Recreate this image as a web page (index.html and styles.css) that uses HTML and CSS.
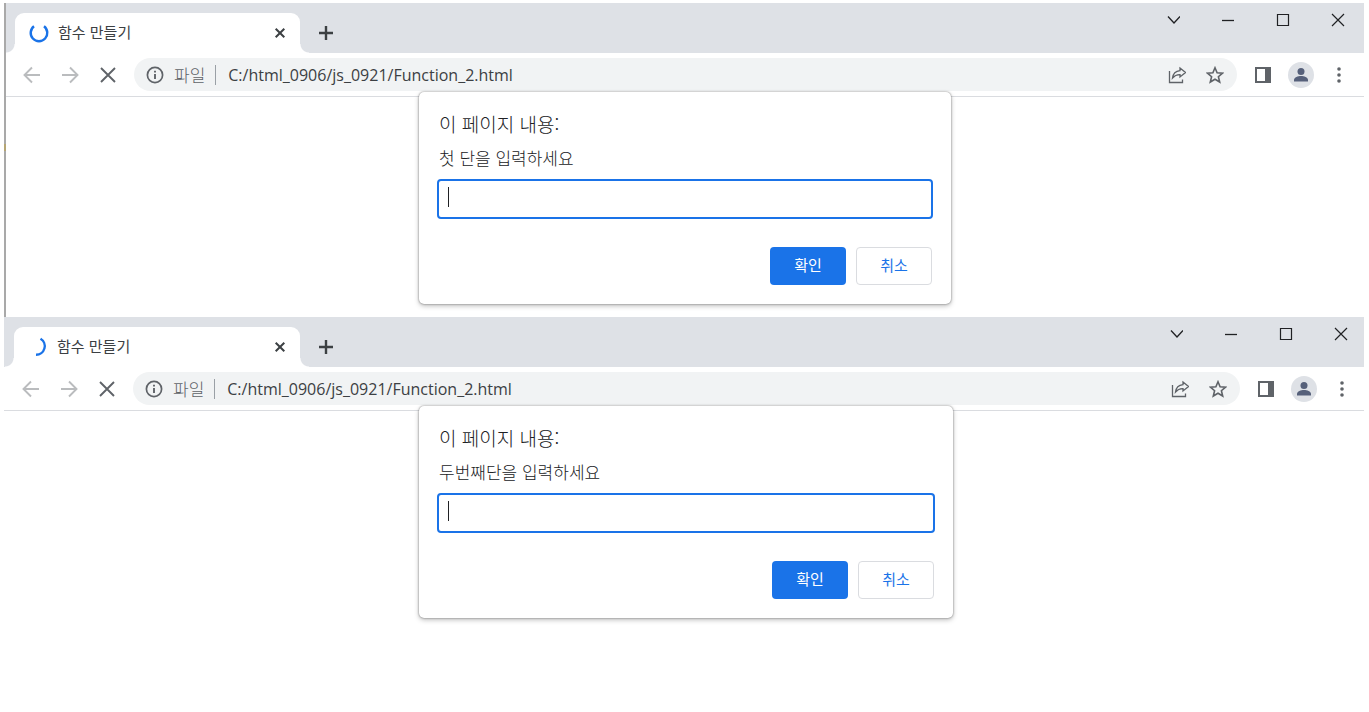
FILE: index.html
```html
<!DOCTYPE html>
<html lang="ko">
<head>
  <meta charset="UTF-8">
  <title>함수 만들기</title>
  <link rel="stylesheet" href="styles.css">
</head>
<body>

  <!-- 공용 아이콘 -->
  <svg class="sprite" aria-hidden="true">
    <symbol id="i-x" viewBox="0 0 12 12"><path d="M1.7 1.7l8.6 8.6M10.3 1.7l-8.6 8.6" stroke-width="2"/></symbol>
    <symbol id="i-plus" viewBox="0 0 16 16"><path d="M8 1v14M1 8h14" stroke-width="2.4"/></symbol>
    <symbol id="i-chevron" viewBox="0 0 14 14"><path d="M2 3.5L8 10l6-6.5" stroke-width="1.3"/></symbol>
    <symbol id="i-min" viewBox="0 0 14 14"><path d="M1 7.5h12" stroke-width="1.3"/></symbol>
    <symbol id="i-max" viewBox="0 0 14 14"><path d="M1.5 1.5h11v11h-11z" stroke-width="1.2"/></symbol>
    <symbol id="i-close" viewBox="0 0 14 14"><path d="M1 1l12 12M13 1L1 13" stroke-width="1.2"/></symbol>
    <symbol id="i-back" viewBox="0 0 20 20"><path d="M18 10H2.5M10 2.5L2.5 10l7.5 7.5" stroke-width="1.9"/></symbol>
    <symbol id="i-forward" viewBox="0 0 20 20"><path d="M2 10h15.5M10 2.5l7.5 7.5-7.5 7.5" stroke-width="1.9"/></symbol>
    <symbol id="i-stop" viewBox="0 0 20 20"><path d="M3 3l14 14M17 3L3 17" stroke-width="1.9"/></symbol>
    <symbol id="i-info" viewBox="0 0 18 18"><circle cx="9" cy="9" r="7.6" stroke-width="1.7"/><path d="M9 8v5M9 4.7v1.9" stroke-width="1.9"/></symbol>
    <symbol id="i-share" viewBox="0 0 18 18"><path d="M1.5 5v11.500h13v-3" stroke-width="1.3"/><path d="M12 2l5.500 4.500-5.500 4.500V8.700C8.500 8.500 6.500 9.700 4.500 12 5 8 7.500 5 12 4.600z" stroke-width="1.3"/></symbol>
    <symbol id="i-star" viewBox="0 0 18 18"><path d="M9 1.800l2.100 5 5.400.4-4.100 3.500 1.300 5.300L9 13.200 4.300 16l1.300-5.300L1.500 7.200l5.400-.4z" stroke-width="1.6"/></symbol>
    <symbol id="i-panel" viewBox="0 0 18 18"><path d="M2 2h14v14H2z" stroke-width="2"/><path d="M11 1h6v16h-6z" fill="currentColor" stroke="none"/></symbol>
    <symbol id="i-user" viewBox="0 0 26 26"><circle cx="13" cy="9.5" r="3.5" fill="currentColor" stroke="none"/><path d="M6 19.5v-1.500c0-2.600 4-4 7-4s7 1.400 7 4v1.500z" fill="currentColor" stroke="none"/></symbol>
    <symbol id="i-dots" viewBox="0 0 6 18"><g fill="currentColor" stroke="none"><circle cx="3" cy="3" r="1.8"/><circle cx="3" cy="9" r="1.8"/><circle cx="3" cy="15" r="1.8"/></g></symbol>
  </svg>

  <!-- 첫 번째 창 -->
  <section class="window window-first">
    <div class="tabstrip">
      <div class="tab">
        <svg class="spinner" viewBox="0 0 20 20"><path d="M5 3.300a8.300 8.300 0 1 0 10 0"/></svg>
        <span class="tab-title">함수 만들기</span>
        <button class="tab-close" aria-label="탭 닫기"><svg width="12" height="12"><use href="#i-x"/></svg></button>
      </div>
      <button class="new-tab" aria-label="새 탭"><svg width="16" height="16"><use href="#i-plus"/></svg></button>
      <div class="controls">
        <button aria-label="탭 검색"><svg width="14" height="14"><use href="#i-chevron"/></svg></button>
        <button aria-label="최소화"><svg width="14" height="14"><use href="#i-min"/></svg></button>
        <button aria-label="최대화"><svg width="14" height="14"><use href="#i-max"/></svg></button>
        <button aria-label="닫기"><svg width="14" height="14"><use href="#i-close"/></svg></button>
      </div>
    </div>

    <div class="toolbar">
      <div class="nav">
        <button class="off" aria-label="뒤로"><svg width="20" height="20"><use href="#i-back"/></svg></button>
        <button class="off" aria-label="앞으로"><svg width="20" height="20"><use href="#i-forward"/></svg></button>
        <button aria-label="중지"><svg width="20" height="20"><use href="#i-stop"/></svg></button>
      </div>
      <div class="address">
        <svg width="18" height="18"><use href="#i-info"/></svg>
        <span class="scheme">파일</span>
        <input class="url" type="text" aria-label="주소" value="C:/html_0906/js_0921/Function_2.html">
        <button aria-label="공유"><svg width="18" height="18"><use href="#i-share"/></svg></button>
        <button aria-label="북마크"><svg width="18" height="18"><use href="#i-star"/></svg></button>
      </div>
      <div class="tools">
        <button aria-label="측면 패널"><svg width="18" height="18"><use href="#i-panel"/></svg></button>
        <button class="avatar" aria-label="프로필"><svg width="26" height="26"><use href="#i-user"/></svg></button>
        <button class="menu" aria-label="메뉴"><svg width="6" height="18"><use href="#i-dots"/></svg></button>
      </div>
    </div>

    <div class="page">
      <form class="dialog">
        <h2>이 페이지 내용:</h2>
        <label for="dan1">첫 단을 입력하세요</label>
        <div class="field">
          <input type="text" id="dan1" autocomplete="off">
          <span class="caret"></span>
        </div>
        <div class="buttons">
          <button class="btn ok" type="button">확인</button>
          <button class="btn cancel" type="button">취소</button>
        </div>
      </form>
    </div>
  </section>

  <!-- 두 번째 창 -->
  <section class="window window-second">
    <div class="tabstrip">
      <div class="tab">
        <svg class="spinner" viewBox="0 0 20 20"><path d="M12.500 1.800A8.600 8.600 0 0 1 8 17.800"/></svg>
        <span class="tab-title">함수 만들기</span>
        <button class="tab-close" aria-label="탭 닫기"><svg width="12" height="12"><use href="#i-x"/></svg></button>
      </div>
      <button class="new-tab" aria-label="새 탭"><svg width="16" height="16"><use href="#i-plus"/></svg></button>
      <div class="controls">
        <button aria-label="탭 검색"><svg width="14" height="14"><use href="#i-chevron"/></svg></button>
        <button aria-label="최소화"><svg width="14" height="14"><use href="#i-min"/></svg></button>
        <button aria-label="최대화"><svg width="14" height="14"><use href="#i-max"/></svg></button>
        <button aria-label="닫기"><svg width="14" height="14"><use href="#i-close"/></svg></button>
      </div>
    </div>

    <div class="toolbar">
      <div class="nav">
        <button class="off" aria-label="뒤로"><svg width="20" height="20"><use href="#i-back"/></svg></button>
        <button class="off" aria-label="앞으로"><svg width="20" height="20"><use href="#i-forward"/></svg></button>
        <button aria-label="중지"><svg width="20" height="20"><use href="#i-stop"/></svg></button>
      </div>
      <div class="address">
        <svg width="18" height="18"><use href="#i-info"/></svg>
        <span class="scheme">파일</span>
        <input class="url" type="text" aria-label="주소" value="C:/html_0906/js_0921/Function_2.html">
        <button aria-label="공유"><svg width="18" height="18"><use href="#i-share"/></svg></button>
        <button aria-label="북마크"><svg width="18" height="18"><use href="#i-star"/></svg></button>
      </div>
      <div class="tools">
        <button aria-label="측면 패널"><svg width="18" height="18"><use href="#i-panel"/></svg></button>
        <button class="avatar" aria-label="프로필"><svg width="26" height="26"><use href="#i-user"/></svg></button>
        <button class="menu" aria-label="메뉴"><svg width="6" height="18"><use href="#i-dots"/></svg></button>
      </div>
    </div>

    <div class="page">
      <form class="dialog">
        <h2>이 페이지 내용:</h2>
        <label for="dan2">두번째단을 입력하세요</label>
        <div class="field">
          <input type="text" id="dan2" autocomplete="off">
          <span class="caret"></span>
        </div>
        <div class="buttons">
          <button class="btn ok" type="button">확인</button>
          <button class="btn cancel" type="button">취소</button>
        </div>
      </form>
    </div>
  </section>

</body>
</html>
```
FILE: styles.css
```css
* {
  box-sizing: border-box;
}
body {
  margin: 3px 5px 0 4px;
  background: #fff;
  color: #3c4043;
  font-family: "Noto Sans CJK KR", sans-serif;
  font-size: 15px;
}
button {
  display: block;
  padding: 0;
  border: none;
  background: none;
  color: inherit;
  font: inherit;
  cursor: pointer;
}
svg {
  display: block;
  flex: none;
  fill: none;
  stroke: currentColor;
}
.sprite {
  position: absolute;
  width: 0;
  height: 0;
}

/* 창 */
.window-first {
  --left: 16px;
  --right: 22px;
  --dialog: 532px;
  border-left: 2px solid #a9a9a9;
  border-image: linear-gradient(#a9a9a9 141px, #b5a574 141px, #b5a574 148px, #a9a9a9 148px) 2;
  border-image-width: 0 0 0 2px;
}
.window-second {
  --left: 17px;
  --right: 19px;
  --dialog: 534px;
}
.window-second .page {
  padding-left: 4px;
}

/* 탭 */
.tabstrip {
  display: flex;
  align-items: flex-end;
  height: 50px;
  padding-left: 9px;
  background: #dee1e6;
}
.window-second .tabstrip {
  padding-left: 10px;
}
.tab {
  position: relative;
  display: flex;
  align-items: center;
  gap: 9px;
  width: 285px;
  height: 40px;
  padding: 0 14px;
  border-radius: 9px 9px 0 0;
  background: #fff;
}
.window-second .tab {
  width: 286px;
}
.tab::before,
.tab::after {
  content: "";
  position: absolute;
  bottom: 0;
  width: 9px;
  height: 9px;
}
.tab::before {
  left: -9px;
  background: radial-gradient(circle at 0 0, #dee1e6 8px, #fff 9px);
}
.tab::after {
  right: -9px;
  background: radial-gradient(circle at 100% 0, #dee1e6 8px, #fff 9px);
}
.spinner {
  width: 20px;
  height: 20px;
  stroke: #1a73e8;
  stroke-width: 2.4;
}
.tab-title {
  flex: 1;
  padding-bottom: 4px;
}
.tab-close,
.new-tab {
  color: #3c4043;
}
.new-tab {
  margin: 0 0 12px 18px;
}
.controls {
  display: flex;
  align-self: flex-start;
  gap: 41px;
  margin-left: auto;
  padding: 10px calc(var(--right) - 3px) 0 0;
  color: #202124;
}

/* 주소 표시줄 */
.toolbar {
  display: flex;
  align-items: center;
  height: 44px;
  padding: 0 var(--right) 0 var(--left);
  border-bottom: 1px solid #dadce0;
  color: #5f6368;
}
.nav {
  display: flex;
  gap: 18px;
}
.nav .off {
  color: #babcbe;
}
.address {
  display: flex;
  flex: 1;
  align-items: center;
  gap: 20px;
  height: 33px;
  margin: 0 17px 0 16px;
  padding: 0 13px 0 12px;
  border-radius: 17px;
  background: #f1f3f4;
}
.scheme {
  margin-left: -10px;
  padding-right: 10px;
  border-right: 1px solid #9aa0a6;
  font-size: 17px;
  font-weight: 300;
  line-height: 20px;
}
.url {
  flex: 1;
  min-width: 0;
  margin-left: -8px;
  padding: 0;
  border: none;
  outline: none;
  background: none;
  color: #3c4043;
  font: 16px "Open Sans", sans-serif;
}
.tools {
  display: flex;
  align-items: center;
  gap: 16px;
}
.avatar {
  border-radius: 50%;
  background: #dee1e6;
  color: #56607a;
}
.menu {
  margin-left: 6px;
}

/* 입력 대화상자 */
.page {
  display: flex;
  justify-content: center;
  padding-bottom: 13px;
}
.dialog {
  z-index: 1;
  width: var(--dialog);
  margin-top: -5px;
  padding: 18px 18px 19px;
  border-radius: 5px;
  background: #fff;
  box-shadow: 0 0 2px rgba(0, 0, 0, 0.5), 0 2px 5px rgba(0, 0, 0, 0.25);
  color: #202124;
}
.dialog h2 {
  margin: 0 0 8px 2px;
  font-size: 19px;
  font-weight: 300;
  line-height: 28px;
}
.dialog label {
  display: block;
  margin: 0 0 9px 2px;
  font-size: 17px;
  font-weight: 300;
  line-height: 24px;
}
.field {
  position: relative;
}
.field input {
  display: block;
  width: 100%;
  height: 40px;
  padding: 0 10px;
  border: 2px solid #1a73e8;
  border-radius: 4px;
  outline: none;
  font: inherit;
}
.caret {
  position: absolute;
  top: 8px;
  left: 11px;
  width: 1px;
  height: 20px;
  background: #202124;
}
.buttons {
  display: flex;
  justify-content: flex-end;
  gap: 10px;
  margin-top: 28px;
  padding-right: 1px;
}
.btn {
  width: 76px;
  height: 38px;
  padding-bottom: 4px;
  border-radius: 4px;
}
.ok {
  background: #1a73e8;
  color: #fff;
}
.cancel {
  border: 1px solid #dadce0;
  color: #1a73e8;
}
```
